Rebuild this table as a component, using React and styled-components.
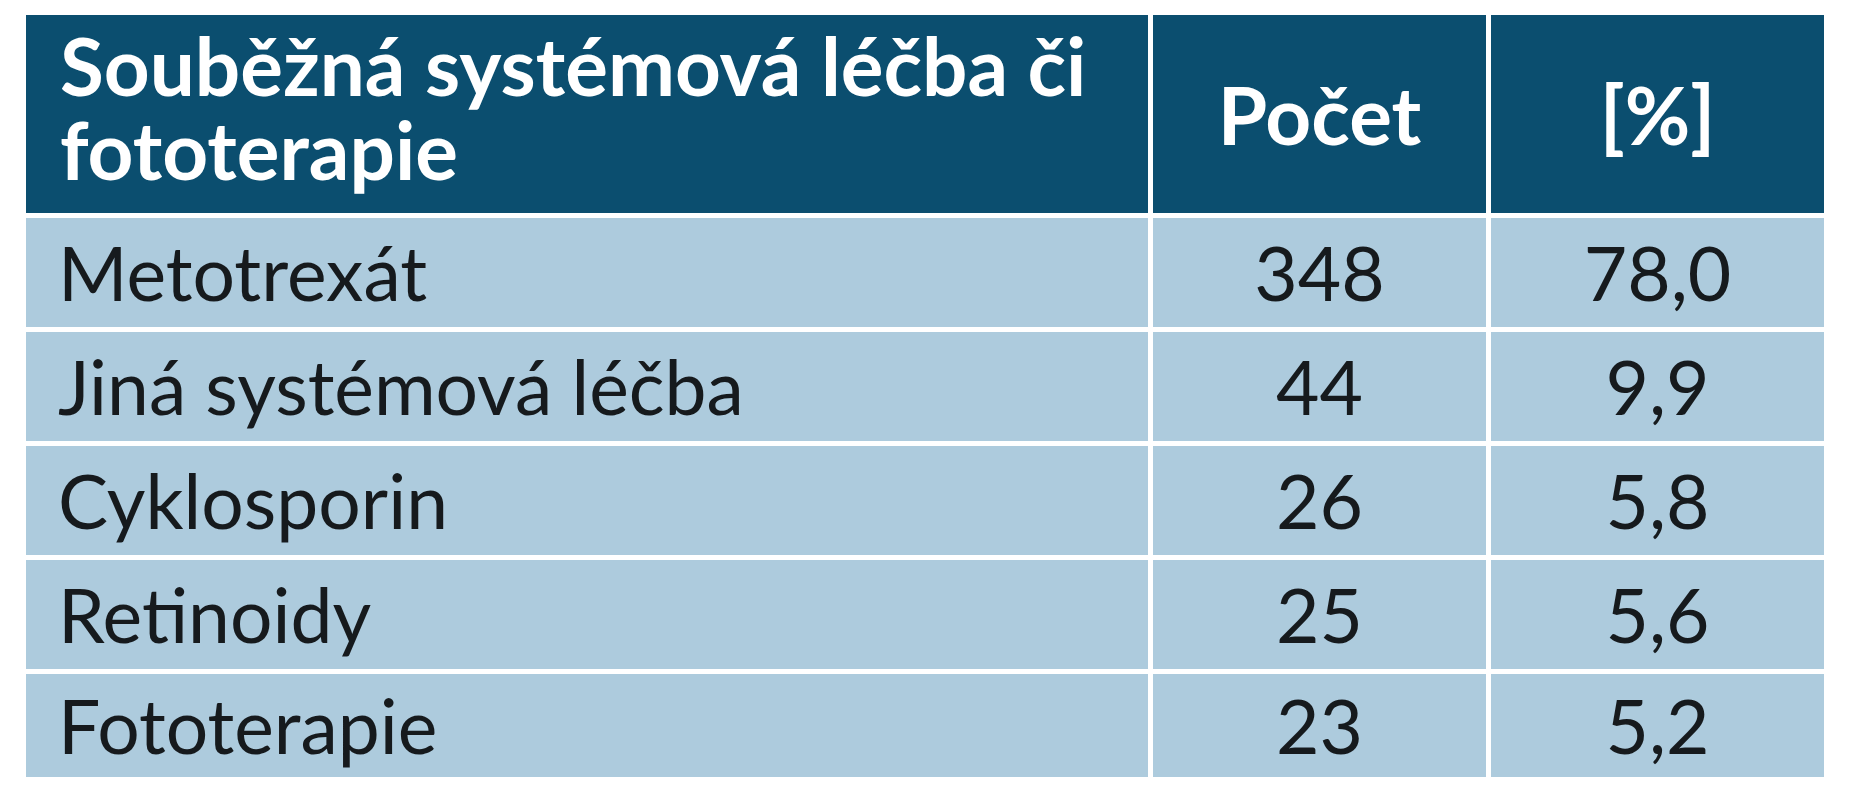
import React from "react";
import styled, { createGlobalStyle } from "styled-components";

const Global = createGlobalStyle`
  html, body { margin: 0; padding: 0; background: #ffffff; }
  body { font-family: "Lato", "Open Sans", sans-serif; }
`;

const Page = styled.div`
  padding: 15px 0 0 26px;
`;

const Grid = styled.div`
  display: grid;
  width: 1798px;
  grid-template-columns: 1122px 333px 1fr;
  grid-template-rows: 198px repeat(4, 109px) 103px;
  gap: 5px;
`;

const HeadCell = styled.div`
  background: #0b4e6f;
  color: #ffffff;
  font-weight: 700;
  font-size: 80px;
  line-height: 84px;
  display: flex;
  align-items: center;
  justify-content: ${(p) => (p.$center ? "center" : "flex-start")};
  padding: ${(p) => (p.$center ? "0" : "0 30px 14px 34px")};
  box-sizing: border-box;
`;

const Cell = styled.div`
  background: #adcbdd;
  color: #161a1d;
  font-size: 75px;
  line-height: 1;
  display: flex;
  align-items: center;
  justify-content: ${(p) => (p.$center ? "center" : "flex-start")};
  padding-left: ${(p) => (p.$center ? "0" : "32px")};
  box-sizing: border-box;
`;

const rows = [
  ["Metotrexát", "348", "78,0"],
  ["Jiná systémová léčba", "44", "9,9"],
  ["Cyklosporin", "26", "5,8"],
  ["Retinoidy", "25", "5,6"],
  ["Fototerapie", "23", "5,2"],
];

export default function App() {
  return (
    <>
      <Global />
      <Page>
        <Grid>
          <HeadCell>Souběžná systémová léčba či fototerapie</HeadCell>
          <HeadCell $center>Počet</HeadCell>
          <HeadCell $center>[%]</HeadCell>
          {rows.map((r) => (
            <React.Fragment key={r[0]}>
              <Cell>{r[0]}</Cell>
              <Cell $center>{r[1]}</Cell>
              <Cell $center>{r[2]}</Cell>
            </React.Fragment>
          ))}
        </Grid>
      </Page>
    </>
  );
}
